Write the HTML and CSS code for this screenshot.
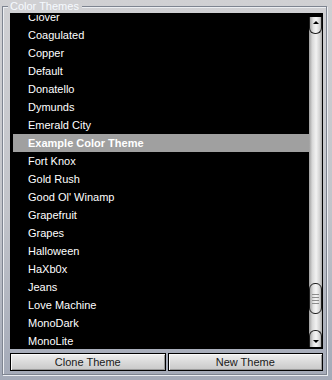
FILE: index.html
```html
<!DOCTYPE html>
<html lang="en">
<head>
  <meta charset="UTF-8" />
  <title>Color Themes</title>
  <link rel="stylesheet" href="styles.css">
</head>
<body>
  <div class="themes-box">
    <span class="legend">Color Themes</span>

    <div class="theme-list">
      <div class="viewport">
        <ul class="items">
          <li>Clover</li>
          <li>Coagulated</li>
          <li>Copper</li>
          <li>Default</li>
          <li>Donatello</li>
          <li>Dymunds</li>
          <li>Emerald City</li>
          <li class="selected">Example Color Theme</li>
          <li>Fort Knox</li>
          <li>Gold Rush</li>
          <li>Good Ol' Winamp</li>
          <li>Grapefruit</li>
          <li>Grapes</li>
          <li>Halloween</li>
          <li>HaXb0x</li>
          <li>Jeans</li>
          <li>Love Machine</li>
          <li>MonoDark</li>
          <li>MonoLite</li>
          <li>Mono Violet</li>
        </ul>
      </div>

      <div class="scrollbar">
        <div class="sb-up"><span class="arrow-up"></span></div>
        <div class="sb-track">
          <div class="sb-thumb">
            <span></span><span></span><span></span><span></span>
          </div>
        </div>
        <div class="sb-down"><span class="arrow-down"></span></div>
      </div>
    </div>

    <div class="actions">
      <button class="btn">Clone Theme</button>
      <button class="btn">New Theme</button>
    </div>
  </div>
</body>
</html>
```

FILE: styles.css
```css
* { margin: 0; padding: 0; box-sizing: border-box; }
html, body { width: 332px; height: 380px; overflow: hidden; }
body {
  font-family: "Liberation Sans", Arial, sans-serif;
  font-size: 11px;
  background: linear-gradient(180deg, #d0d0d3 0%, #c2c4ca 55%, #a4aab8 100%);
  padding-top: 6px;
}

.themes-box {
  position: relative;
  margin: 0 5px 0 2px;
  height: 369px;
  border: 1px solid #7e8490;
  box-shadow: 1px 1px 0 #eceef2, inset 1px 1px 0 #eceef2;
  padding: 6px 3px 3px 7px;
}
/* caption sits on top of the frame line */
.themes-box .legend {
  position: absolute;
  top: -7px;
  left: 5px;
  padding: 0 3px 0 2px;
  height: 12px;
  line-height: 12px;
  background: #d0d0d3;
  color: #f6faff;
}

.theme-list {
  display: flex;
  height: 336px;
  background: #000;
}
.viewport {
  flex: 1;
  margin-top: 2px;
  overflow: hidden;
}
.items {
  list-style: none;
  margin-top: -7px;
  padding-left: 3px;
}
.items li {
  height: 18px;
  line-height: 18px;
  padding-left: 15px;
  color: #fff;
  white-space: nowrap;
}
.items li.selected {
  background: #a0a0a0;
  font-weight: bold;
}

.scrollbar {
  width: 13px;
  margin: 4px 1px 2px 0;
  display: flex;
  flex-direction: column;
  background: linear-gradient(90deg, #9c9c9c 0%, #d8d8d8 25%, #f2f2f2 55%, #d0d0d0 85%, #a8a8a8 100%);
}
.sb-up, .sb-down {
  height: 17px;
  position: relative;
  border: 1px solid #202020;
  background: linear-gradient(90deg, #a4a4a4 0%, #e2e2e2 30%, #f6f6f6 55%, #d6d6d6 85%, #ababab 100%);
}
.sb-up {
  border-top: none;
  border-radius: 0 0 6px 6px;
}
.sb-down {
  border-bottom: none;
  border-radius: 6px 6px 0 0;
}
.arrow-up, .arrow-down {
  position: absolute;
  left: 3px;
  width: 0;
  height: 0;
  border-left: 3px solid transparent;
  border-right: 3px solid transparent;
}
.arrow-up { top: 4px; border-bottom: 3px solid #000; }
.arrow-down { bottom: 4px; border-top: 3px solid #000; }

.sb-track {
  flex: 1;
  display: flex;
  flex-direction: column;
  justify-content: flex-end;
  padding-bottom: 16px;
}
.sb-thumb {
  height: 31px;
  border: 1px solid #202020;
  border-radius: 6px;
  background: linear-gradient(90deg, #a4a4a4 0%, #e2e2e2 30%, #f6f6f6 55%, #d6d6d6 85%, #ababab 100%);
  display: flex;
  flex-direction: column;
  justify-content: center;
  align-items: center;
  gap: 2px;
}
.sb-thumb span {
  width: 7px;
  height: 1px;
  background: #8c8c8c;
}

.actions {
  display: flex;
  gap: 2px;
  margin-top: 4px;
}
.btn {
  flex: 1;
  height: 18px;
  border: 1px solid #000;
  background: linear-gradient(180deg, #f0f0f0 0%, #dcdcdc 45%, #c8c8c8 100%);
  box-shadow: inset 1px 1px 0 #fafafa, inset -1px -1px 0 #9a9a9a;
  font-family: "Liberation Sans", Arial, sans-serif;
  font-size: 11px;
  color: #1a1a1a;
  display: flex;
  align-items: center;
  justify-content: center;
}
```
